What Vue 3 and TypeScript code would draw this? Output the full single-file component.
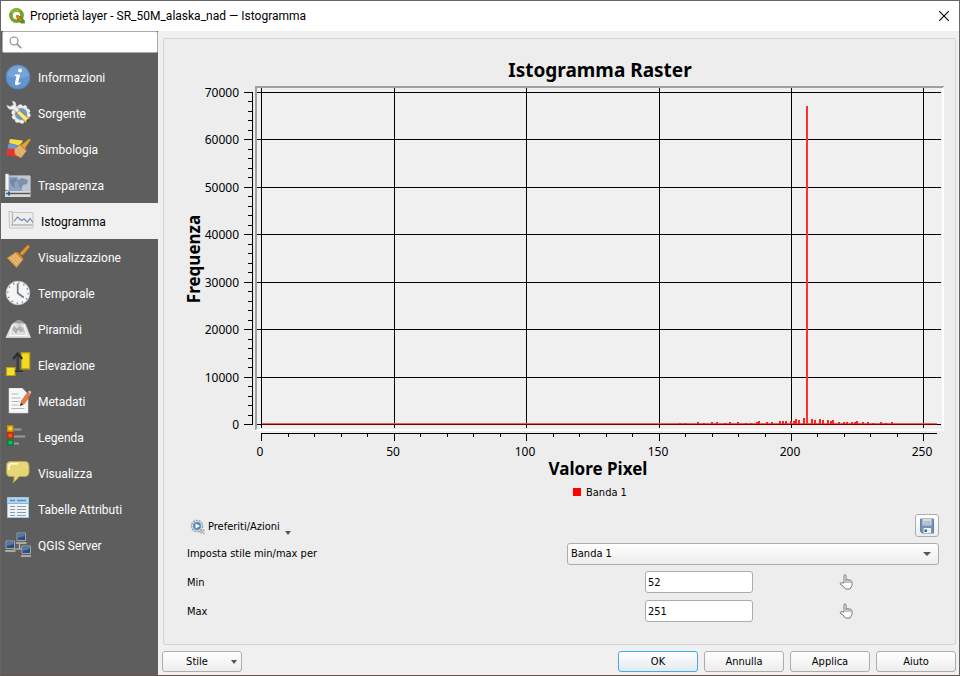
<script setup lang="ts">
import { ref } from 'vue'

interface Bar {
  value: number
  count: number
}

const pages = [
  { id: 'info', label: 'Informazioni' },
  { id: 'source', label: 'Sorgente' },
  { id: 'style', label: 'Simbologia' },
  { id: 'transparency', label: 'Trasparenza' },
  { id: 'histogram', label: 'Istogramma' },
  { id: 'rendering', label: 'Visualizzazione' },
  { id: 'temporal', label: 'Temporale' },
  { id: 'pyramids', label: 'Piramidi' },
  { id: 'elevation', label: 'Elevazione' },
  { id: 'metadata', label: 'Metadati' },
  { id: 'legend', label: 'Legenda' },
  { id: 'display', label: 'Visualizza' },
  { id: 'tables', label: 'Tabelle Attributi' },
  { id: 'server', label: 'QGIS Server' },
]

const current = ref('histogram')
const search = ref('')
const band = ref('Banda 1')
const min = ref('52')
const max = ref('251')

/* Plot geometry in chart units */
const x0 = 97
const y0 = 385
const xAt = (v: number) => x0 + Math.floor(v * 2.6495 + 0.6)
const yAt = (v: number) => Math.round(y0 - (v * 332) / 70000)

const xMajor = [0, 50, 100, 150, 200, 250]
const xMinor = Array.from({ length: 26 }, (_, i) => i * 10).filter((v) => v % 50 !== 0)
const yMajor = [0, 10000, 20000, 30000, 40000, 50000, 60000, 70000]
const yMinor = Array.from({ length: 35 }, (_, i) => i * 2000).filter((v) => v % 10000 !== 0)

const bars: Bar[] = [
  [158, 300], [160, 300], [165, 420], [167, 300], [170, 420], [172, 400], [175, 300], [177, 420],
  [180, 400], [183, 300], [185, 300], [187, 520], [188, 560], [191, 520], [193, 520], [196, 620],
  [197, 560], [198, 640], [200, 560], [201, 640], [202, 1000], [203, 900], [205, 1250],
  [208, 1000], [209, 820], [211, 1050], [212, 900], [214, 820], [215, 640], [216, 760],
  [218, 520], [220, 500], [221, 480], [223, 480], [224, 460], [225, 540], [227, 420],
  [229, 400], [231, 300], [234, 400], [236, 300], [238, 400],
].map(([value, count]) => ({ value, count }))
</script>

<template>
  <div class="dialog">
    <header class="titlebar">
      <svg class="logo" viewBox="0 0 16 16" aria-hidden="true">
        <circle cx="7.5" cy="7.5" r="5.6" fill="none" stroke="#6fa52d" stroke-width="3.6" />
        <path d="M2.5 5a5.6 5.6 0 0 1 8-2.2" fill="none" stroke="#93b93c" stroke-width="2" />
        <path d="M8 8h3.5l4.3 4.5v3H12L8 11.5z" fill="#57902b" />
        <path d="M7 7h3v1.5L13 12l-1.4 1.2-3-3.2H7z" fill="#ee7913" />
      </svg>
      <h1>Proprietà layer - SR_50M_alaska_nad — Istogramma</h1>
      <button class="close" type="button" aria-label="Chiudi">
        <svg viewBox="0 0 10 10"><path d="M0 0l10 10M10 0L0 10" stroke="#000" stroke-width="1.1" /></svg>
      </button>
    </header>

    <div class="body">
      <aside class="sidebar">
        <label class="search">
          <svg viewBox="0 0 13 13" aria-hidden="true">
            <circle cx="5" cy="5" r="4" fill="none" stroke="#858585" stroke-width="1.1" />
            <path d="M8 8l4.3 4.2" stroke="#858585" stroke-width="1.4" />
          </svg>
          <input v-model="search" type="text" aria-label="Cerca" />
        </label>
        <nav>
          <button
            v-for="page in pages"
            :key="page.id"
            type="button"
            class="page"
            :class="{ selected: page.id === current }"
            @click="current = page.id"
          >
            <svg viewBox="0 0 26 26" aria-hidden="true">
              <g v-if="page.id === 'info'">
                <circle cx="13" cy="13" r="12.2" fill="#6296d0" />
                <path d="M2 12a11 11 0 0 1 22 0q-11 4-22 0z" fill="#83aedb" opacity=".6" />
                <circle cx="13" cy="13" r="11.8" fill="none" stroke="#4f83bf" stroke-width=".8" />
                <circle cx="15" cy="6.6" r="2" fill="#fff" />
                <path d="M10 10.5h5.2l-2 8q0 1.2 2.2-.4l.5.8q-6 4.4-6 .3l1.6-7.3H9.8z" fill="#fff" />
              </g>
              <g v-else-if="page.id === 'source'">
                <circle cx="16" cy="14" r="7.4" fill="#6c9bcb" stroke="#e4e6e6" stroke-width="2.6" />
                <circle cx="16" cy="14" r="8.6" fill="none" stroke="#f4f4f4" stroke-width="2" stroke-dasharray="3.3 2.1" />
                <path d="M1.500 5l4 1.500 3-2L7 1q5 0 4 5.500L17 12.5 14.8 15 8.5 9.500Q3 11 1.500 5z" fill="#f0f0ed" stroke="#8f8f8f" stroke-width=".5" />
                <path d="M11.5 13l3-2.8 9.8 8.3-3.6 4z" fill="#ecd675" stroke="#8b722d" stroke-width=".8" />
                <path d="M13 12l9.3 8.3" stroke="#fff0a5" stroke-width="1.3" />
                <circle cx="22.8" cy="20.7" r="1.4" fill="#584b23" />
              </g>
              <g v-else-if="page.id === 'style'">
                <path d="M5 3l13 1.500-3 5.500-11-3z" fill="#f4e03e" />
                <path d="M3.500 7.500l9 1.500-2 5-8-1z" fill="#6d97d0" />
                <path d="M2.500 12.500l7.500.5 3 8.500-7-2-5-.5z" fill="#ea3327" />
                <path d="M9.500 13L15 8.500l6.500 6.500L16 22l-6-3.500z" fill="#e8b878" stroke="#b07a3c" stroke-width=".6" />
                <path d="M11.500 12.500l6 6.500M13.500 11l6 6M10.500 15l5.500 5" stroke="#c99553" stroke-width=".6" />
                <path d="M15 8.500l2.500-.5L24.500 2.500q1.500.5.8 2L20.500 11.500l1 3.500z" fill="#e6a33e" stroke="#a86d20" stroke-width=".7" />
              </g>
              <g v-else-if="page.id === 'transparency'">
                <path d="M3 4h22v16H3z" fill="#8ea3c2" stroke="#d8dce0" />
                <path d="M12 4h13v16h-7z" fill="#c5ccd6" opacity=".8" />
                <path d="M5 7l6-1 1 3-3 2 1 5-3-2-2-4zM13 8l4-2 6 2-1 4-4 1-2 4-2-4z" fill="#6b7c95" opacity=".7" />
                <path d="M.5 2h3v16h-3z" fill="#f5f5f5" stroke="#ccc" stroke-width=".5" />
                <path d="M0 19h25.5v6H0z" fill="#d8d8d8" />
                <path d="M1 21.5h24" stroke="#555" stroke-width="1.4" />
                <path d="M4 19.5v4" stroke="#2b60aa" stroke-width="2" />
              </g>
              <g v-else-if="page.id === 'histogram'">
                <path d="M1 3.5h3.5l1 1H25v15.500H1.5z" fill="#eee" stroke="#c4c4c4" />
                <path d="M4.5 4v14M3 17h21.5" stroke="#b6b6b6" stroke-width="1.3" />
                <path d="M6 13.500l3.500-4.500 4 3.500 2.5-1.5 3.5 3 2.5-3.500 3 4" fill="none" stroke="#6e88b3" stroke-width="1.1" />
              </g>
              <g v-else-if="page.id === 'rendering'">
                <path d="M14.5 9.5l8-8.5q3 0 2 2.5l-7 8z" fill="#dd9937" stroke="#a76a1c" stroke-width=".8" />
                <path d="M2.3 14L11 8l7 7.5-6.5 8z" fill="#e9b76e" stroke="#b87e36" stroke-width=".8" />
                <path d="M4 13.5l8 8.5M6 12l8 8M8 10.5l7.5 8" stroke="#cb944b" stroke-width=".7" />
                <path d="M11.5 8.5l6 6.5" stroke="#d18c2c" stroke-width="2.2" />
              </g>
              <g v-else-if="page.id === 'temporal'">
                <circle cx="13" cy="13" r="11.8" fill="#f4f5f4" stroke="#c9cccc" stroke-width=".8" />
                <circle cx="13" cy="13" r="10.2" fill="none" stroke="#6388b1" stroke-width="1.4" stroke-dasharray="1.3 4.04" />
                <path d="M12.7 3.5V13l6 4.5" fill="none" stroke="#777" stroke-width="1.7" />
              </g>
              <g v-else-if="page.id === 'pyramids'">
                <path d="M1 21.5l6-13L12 5h4l4.5 3.5 5 13z" fill="#dedede" stroke="#f0f0f0" stroke-width=".6" />
                <path d="M9 7.500l3.500-3.500h3L19 7.500l-4 2z" fill="#9a9a9a" />
                <path d="M7 13l2-3 3 2.500 2-2.500 4 1.500 2 5-3-2-2 1-2-1.500-3 2z" fill="#b4b4b4" />
                <path d="M7.500 9L4.500 19.500H22L19 9M9 8h9" stroke="#fafafa" fill="none" />
                <path d="M9 14l2 3 1-4M15 13l2 3" stroke="#9c9c9c" fill="none" />
              </g>
              <g v-else-if="page.id === 'elevation'">
                <path d="M16.5.8h8.2v16h-8.2z" fill="#f2db24" stroke="#c2a204" stroke-width="1.2" />
                <path d="M1.5 15.5H10v8H1.5z" fill="#f5df37" stroke="#c2a204" stroke-width="1.2" />
                <path d="M10 19.2h8" stroke="#282f33" stroke-width="1.4" />
                <path d="M12.7 19V3" stroke="#353d40" stroke-width="2.400" />
                <path d="M8.200 7L12.700 1.500 17.200 7" fill="none" stroke="#262f32" stroke-width="2.200" />
              </g>
              <g v-else-if="page.id === 'metadata'">
                <path d="M4 0h13l6 6v19H4z" fill="#f8f8f8" stroke="#d5d5d5" stroke-width=".6" />
                <path d="M6.5 6h7M6.5 10h9M6.5 13.5h8M6.5 17h7M6.5 20.5h13" stroke="#b1b5b7" stroke-width="1.1" />
                <path d="M15.2 18l1.2-5L23 4l3 2-6.5 9.5z" fill="#e78044" stroke="#a94c20" stroke-width=".6" />
                <path d="M23 4l1.5-1.5 2 1.6L25.5 6z" fill="#e9c9c0" />
                <path d="M15.2 18l.8-3 2 1.3z" fill="#333" />
              </g>
              <g v-else-if="page.id === 'legend'">
                <path d="M9 5.5h7.5M9 12.5h11M9 19.5h5" stroke="#999" stroke-width="2" />
                <path d="M2.8 2h5v5h-5z" fill="#ffd21d" stroke="#db950b" stroke-width="1.3" />
                <path d="M2.8 9h5v5h-5z" fill="#ff5413" stroke="#bd2e04" stroke-width="1.3" />
                <path d="M2.8 16h5v5h-5z" fill="#18b96a" stroke="#087b3d" stroke-width="1.3" />
              </g>
              <g v-else-if="page.id === 'display'">
                <path d="M5 1.5h15q4 0 4 4v7q0 4-4 4h-6Q12 20 8 22.5q1.5-3 1-6H5q-3.5 0-3.5-4v-7q0-4 3.5-4z" fill="#e6d678" stroke="#b9a346" />
                <path d="M4 10V6q.2-2 2.5-2.3H13" fill="none" stroke="#fffbe0" stroke-width="1.6" />
              </g>
              <g v-else-if="page.id === 'tables'">
                <path d="M2.5 1.5h21v20h-21z" fill="#f2f4f4" stroke="#a1c7e3" />
                <path d="M3 2h20v5H3z" fill="#b2d5ef" />
                <path d="M5 4.5h5M12 4.5h9" stroke="#568abe" stroke-width="1.3" />
                <path d="M5 10.500h5M12 10.500h9M5 13.500h5M12 13.500h9M5 16.500h5M12 16.500h9M5 19.500h5M12 19.500h9" stroke="#899eb2" />
                <path d="M2.5 7.5h21" stroke="#8ab4d7" />
              </g>
              <g v-else>
                <path d="M14.5 11v6M8 17h14" stroke="#c3c3c3" stroke-width="1.2" fill="none" />
                <g v-for="([mx, my]) in [[12, 1], [1, 9], [17, 14]]" :key="mx">
                  <path :d="`M${mx} ${my}h8.5v7.5H${mx}z`" fill="#274f87" stroke="#a6a6a0" />
                  <path :d="`M${mx + 1} ${my + 1}h6.5v2l-6.5 2z`" fill="#5279ae" />
                  <path :d="`M${mx - 1} ${my + 9}h10.5v2H${mx - 1}z`" fill="#b8b8b0" stroke="#777" stroke-width=".4" />
                </g>
              </g>
            </svg>
            <span>{{ page.label }}</span>
          </button>
        </nav>
      </aside>

      <main class="content">
        <section class="panel">
          <svg class="chart" viewBox="0 0 791 465" role="img" aria-label="Istogramma Raster">
            <text class="chart-title" x="436" y="38" text-anchor="middle">Istogramma Raster</text>

            <g shape-rendering="crispEdges">
              <rect x="93" y="49" width="685" height="341" fill="#f0f0f0" />
              <path d="M780 47v345H91v-2h687V49z" fill="#fff" />
              <path d="M91 47h689l-2 2H93v341l-2 1z" fill="#a0a0a0" />
              <rect v-for="v in xMajor" :key="'gx' + v" :x="xAt(v)" y="49" width="1" height="340" />
              <rect v-for="v in yMajor" :key="'gy' + v" x="93" :y="yAt(v)" width="684" height="1" />

              <rect x="88" y="53" width="1" height="333" />
              <rect v-for="v in yMajor" :key="'ty' + v" x="80" :y="yAt(v)" width="8" height="1" />
              <rect v-for="v in yMinor" :key="'my' + v" x="84" :y="yAt(v)" width="4" height="1" />

              <rect x="97" y="394" width="676" height="1" />
              <rect v-for="v in xMajor" :key="'tx' + v" :x="xAt(v)" y="394" width="1" height="8" />
              <rect v-for="v in xMinor" :key="'mx' + v" :x="xAt(v)" y="394" width="1" height="4" />

              <rect x="98" y="384" width="675" height="1" fill="#e36060" />
              <rect x="98" y="385" width="675" height="1" fill="#850000" />
              <rect
                v-for="bar in bars"
                :key="bar.value"
                :x="xAt(bar.value) - 1"
                :y="yAt(bar.count)"
                width="2"
                :height="y0 - yAt(bar.count)"
                fill="#ff2020"
              />
              <rect x="642" y="67" width="2" height="318" fill="#ff3030" />
              <rect x="409" y="449" width="8" height="8" fill="#f00" />
            </g>

            <text v-for="v in yMajor" :key="'ly' + v" class="tick" x="75" :y="yAt(v) + 5" text-anchor="end">{{ v }}</text>
            <text v-for="v in xMajor" :key="'lx' + v" class="tick" :x="xAt(v) - 1" y="417" text-anchor="middle">{{ v }}</text>
            <text class="axis" x="434" y="436" text-anchor="middle">Valore Pixel</text>
            <text class="axis" transform="translate(36 220) rotate(-90)" text-anchor="middle">Frequenza</text>
            <text class="legend" x="422" y="457">Banda 1</text>
          </svg>

          <div class="controls">
            <div class="toolbar">
              <button class="actions" type="button">
                <svg viewBox="0 0 16 16" aria-hidden="true">
                  <circle cx="7" cy="7" r="5.5" fill="#e8eaec" stroke="#a3a7ab" stroke-width="1.6" stroke-dasharray="2.2 .8" />
                  <circle cx="7" cy="7" r="4" fill="#5688bd" />
                  <path d="M5.5 4.5L10 7 5.5 9.5z" fill="#fff" />
                  <path d="M10.5 10.5l4 4.5M13 10.5l1.5 1.5M9.500 12.500l2 2" stroke="#aaa" stroke-width="1.2" />
                </svg>
                <span>Preferiti/Azioni</span>
                <i class="arrow"></i>
              </button>
              <button class="save" type="button" aria-label="Salva">
                <svg viewBox="0 0 16 16">
                  <path d="M1.5 1h13v14H3l-1.5-1.5z" fill="#6d93bf" stroke="#5f83ad" />
                  <path d="M3.5 1h9v6.5h-9z" fill="#d7d9da" />
                  <path d="M4.5 4h7M4.5 6h7" stroke="#a4a6a8" />
                  <path d="M4.5 10h7.5v5H4.5z" fill="#edf0f2" />
                  <path d="M5.5 11.5H8V14H5.5z" fill="#3e638c" />
                </svg>
              </button>
            </div>
            <label for="band">Imposta stile min/max per</label>
            <div class="combo">
              <select id="band" v-model="band"><option>Banda 1</option></select>
              <i class="arrow"></i>
            </div>
            <label for="min">Min</label>
            <div class="range">
              <input id="min" v-model="min" type="text" />
              <button class="pick" type="button" aria-label="Scegli min sul grafico">
                <svg viewBox="0 0 14 16"><path d="M5 9V1.5q1-1.5 2 0V6l1.5-.5L10 6l1.5.3L13 7.5v4L11 15H6.5L4 12 1 9.8q.5-1.6 2-1z" fill="#fff" stroke="#777" /><path d="M7 6v3M9 6v3M11 7v2" stroke="#888" /></svg>
              </button>
            </div>
            <label for="max">Max</label>
            <div class="range">
              <input id="max" v-model="max" type="text" />
              <button class="pick" type="button" aria-label="Scegli max sul grafico">
                <svg viewBox="0 0 14 16"><path d="M5 9V1.5q1-1.5 2 0V6l1.5-.5L10 6l1.5.3L13 7.5v4L11 15H6.5L4 12 1 9.8q.5-1.6 2-1z" fill="#fff" stroke="#777" /><path d="M7 6v3M9 6v3M11 7v2" stroke="#888" /></svg>
              </button>
            </div>
          </div>
        </section>

        <footer>
          <button class="push menu" type="button"><span>Stile</span><i class="arrow"></i></button>
          <button class="push primary" type="button">OK</button>
          <button class="push" type="button">Annulla</button>
          <button class="push" type="button">Applica</button>
          <button class="push" type="button">Aiuto</button>
        </footer>
      </main>
    </div>
  </div>
</template>

<style>
body {
  background: #f0f0f0;
}
</style>

<style scoped>
.dialog {
  box-sizing: border-box;
  min-height: 100vh;
  display: flex;
  flex-direction: column;
  border: 1px solid #666;
  border-bottom-color: #6b5548;
  background: #f0f0f0;
  color: #000;
  font: 11px/16px 'DejaVu Sans Condensed', 'DejaVu Sans', sans-serif;
}
button,
input,
select {
  font: inherit;
  color: inherit;
  box-sizing: border-box;
  margin: 0;
}
button {
  padding: 0;
  border: 0;
  background: none;
}
.titlebar {
  display: flex;
  align-items: center;
  height: 30px;
  padding: 0 10px 0 8px;
  background: #fff;
}
.logo {
  width: 16px;
  height: 16px;
  margin-right: 5px;
}
h1 {
  flex: 1;
  margin: 0;
  font: 12px/16px Roboto, sans-serif;
}
.close {
  display: flex;
}
.close svg {
  width: 10px;
  height: 10px;
}
.body {
  flex: 1;
  display: flex;
}
.sidebar {
  flex: 0 0 157px;
  background: #5e5e5e;
}
.search {
  display: flex;
  align-items: center;
  box-sizing: border-box;
  height: 22px;
  margin: 0 0 6px 1px;
  padding-left: 6px;
  border: 1px solid #ababab;
  border-radius: 2px;
  background: #fff;
}
.search svg {
  flex: none;
  width: 13px;
  height: 13px;
}
.search input {
  flex: 1;
  min-width: 0;
  border: 0;
  outline: 0;
  background: none;
}
.page {
  display: flex;
  align-items: center;
  width: 100%;
  height: 36px;
  padding-left: 4px;
  color: #fff;
  font: 12px/16px Roboto, sans-serif;
}
.page.selected {
  padding-left: 7px;
  background: #f0f0f0;
  color: #000;
}
.page svg {
  width: 26px;
  height: 26px;
  margin-right: 7px;
}
.page span {
  padding-top: 1px;
}
.content {
  flex: 1;
  min-width: 0;
  display: flex;
  flex-direction: column;
  padding: 7px 3px 3px 4px;
}
.panel {
  flex: 1;
  margin-left: 1px;
  border: 1px solid #d5d5d5;
  border-radius: 2px;
  background: #ededed;
}
.chart {
  display: block;
  width: 100%;
  height: auto;
}
.chart-title {
  font: bold 19px 'Noto Sans', sans-serif;
}
.axis {
  font: bold 17px 'Noto Sans', sans-serif;
}
.tick {
  font: 12px 'Noto Sans', sans-serif;
}
.legend {
  font: 11px 'DejaVu Sans Condensed', sans-serif;
}
.controls {
  display: grid;
  grid-template-columns: 1fr 1fr;
  gap: 6px 8px;
  align-items: center;
  padding: 10px 16px 21px 23px;
}
.toolbar {
  grid-column: 1 / -1;
  display: flex;
  justify-content: space-between;
  align-items: center;
  height: 23px;
}
.actions {
  display: flex;
  align-items: center;
  padding: 2px 0 0 3px;
}
.actions svg {
  width: 16px;
  height: 16px;
  margin-right: 2px;
}
.arrow {
  width: 0;
  height: 0;
  border: 3px solid transparent;
  border-top: 4px solid #555;
  border-bottom: 0;
}
.actions .arrow {
  align-self: flex-end;
  margin-left: 5px;
}
.save,
.push,
.combo select {
  border: 1px solid #adadad;
  border-radius: 3px;
  background: linear-gradient(#fff, #ededed);
}
.save {
  display: flex;
  align-items: center;
  justify-content: center;
  width: 24px;
  height: 23px;
}
.save svg {
  width: 16px;
  height: 16px;
}
.combo {
  display: flex;
  align-items: center;
  position: relative;
}
.combo select {
  appearance: none;
  width: 100%;
  height: 22px;
  padding: 0 3px;
}
.combo .arrow {
  position: absolute;
  right: 8px;
  border-width: 4px 4px 0;
  pointer-events: none;
}
.range {
  display: grid;
  grid-template-columns: 1fr 1fr;
  align-items: center;
  padding-bottom: 1px;
}
.range input {
  justify-self: end;
  width: 108px;
  height: 22px;
  padding: 0 2px;
  border: 1px solid #ababab;
  border-radius: 3px;
  background: #fff;
}
.pick {
  display: flex;
  justify-self: center;
}
.pick svg {
  width: 14px;
  height: 16px;
}
footer {
  display: flex;
  gap: 6px;
  padding-top: 6px;
}
.push {
  width: 80px;
  height: 21px;
}
.push.primary {
  border-color: #3daee9;
  background: linear-gradient(#fff, #e4eaf0);
}
.menu {
  display: flex;
  align-items: center;
  margin-right: auto;
  padding: 0 4px 0 0;
}
.menu span {
  flex: 1;
}
</style>
